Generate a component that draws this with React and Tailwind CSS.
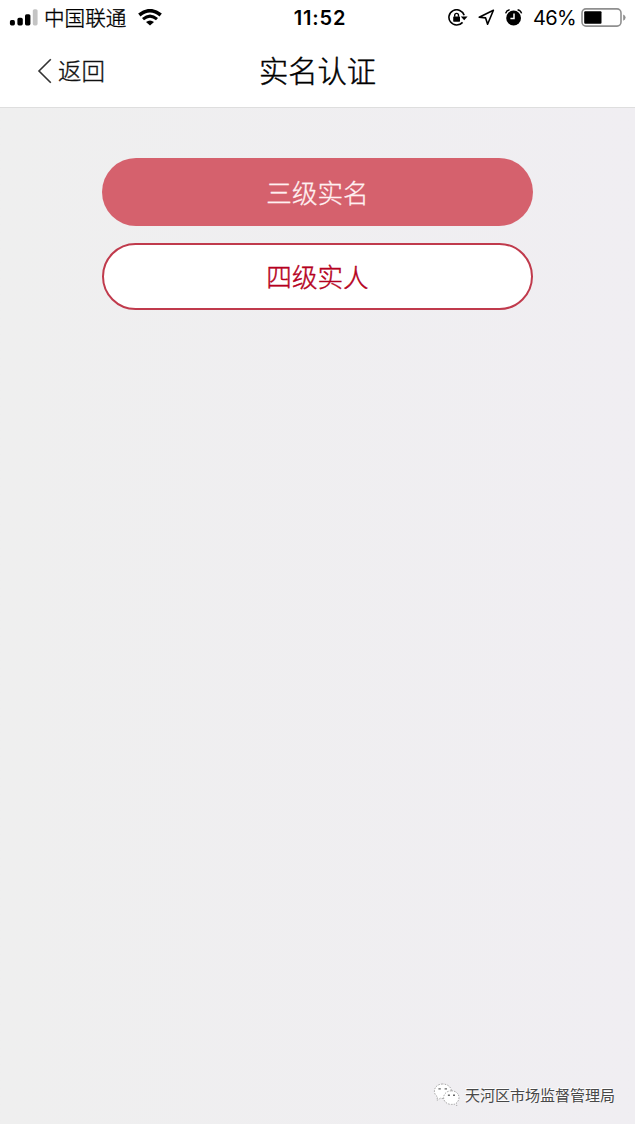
const cjk = "font-['Noto_Sans_CJK_SC',sans-serif]";

function SignalIcon() {
  return (
    <svg className="block h-[18px] w-[29px] shrink-0" viewBox="0 0 29 18">
      <rect x="0.9" y="11.1" width="5" height="5.3" rx="1.6" fill="#000" />
      <rect x="8.4" y="8.8" width="5.4" height="7.6" rx="1.6" fill="#000" />
      <rect x="16" y="5.2" width="5.4" height="11.2" rx="1.6" fill="#000" />
      <rect x="23.8" y="0.2" width="4.8" height="16.2" rx="1.6" fill="#c4c4c4" />
    </svg>
  );
}

function WifiIcon() {
  return (
    <svg className="block h-[18px] w-[24px] shrink-0" viewBox="0 0 24 18" fill="none" stroke="#000">
      <path d="M1.3 6Q12-2.6 22.7 6" strokeWidth="3.6" />
      <path d="M5 10.2Q12 4 19 10.2" strokeWidth="3" />
      <path d="M8 13Q12 9.8 16 13L12 16.6Z" fill="#000" stroke="none" />
    </svg>
  );
}

function RotationLockIcon() {
  return (
    <svg className="block h-[18px] w-[20px] shrink-0" viewBox="0 0 20 18" fill="none" stroke="#000">
      <path d="M16.2 6.2A7.8 7.6 0 1 0 14.6 13.4" strokeWidth="1.6" />
      <path d="M12.8 7.4H19.6L16.2 11.2Z" fill="#000" stroke="none" />
      <rect x="5.2" y="7.4" width="6.8" height="5.3" rx="0.6" fill="#000" stroke="none" />
      <path d="M6.7 7.8V6.3a1.9 1.9 0 0 1 3.8 0V7.8" strokeWidth="1.4" />
    </svg>
  );
}

function LocationIcon() {
  return (
    <svg className="block h-[17px] w-[17px] shrink-0" viewBox="0 0 17 17" fill="none" stroke="#000" strokeWidth="1.6" strokeLinejoin="round">
      <path d="M15.4 1.2L1.2 8.2L7.6 8.9L9.6 15.2Z" />
    </svg>
  );
}

function AlarmIcon() {
  return (
    <svg className="block h-[18px] w-[18px] shrink-0" viewBox="0 0 18 18" fill="none">
      <circle cx="8.6" cy="9" r="7.4" fill="#000" />
      <path d="M9 4.6V9.4H5.4" stroke="#fff" strokeWidth="1.5" />
      <path d="M0.6 4.4Q1.4 1.4 4.6 0.7M16.6 4.4Q15.8 1.4 12.6 0.7" stroke="#000" strokeWidth="1.4" />
    </svg>
  );
}

function BatteryIcon() {
  return (
    <svg className="block h-[20px] w-[45px] shrink-0" viewBox="0 0 45 20">
      <rect x="1" y="0.9" width="39" height="17.2" rx="4" fill="#fff" stroke="#8f8f8f" strokeWidth="1.6" />
      <rect x="3.2" y="3.3" width="17.3" height="12.4" rx="1" fill="#000" />
      <path d="M42.2 6.4Q44.6 7.3 44.6 9.6T42.2 12.8Z" fill="#8f8f8f" />
    </svg>
  );
}

function ChatIcon() {
  return (
    <svg className="block h-[24px] w-[27px] shrink-0" viewBox="0 0 27 24" fill="#fff" stroke="#888" strokeWidth="0.7" strokeDasharray="1.6 1.2">
      <path d="M9.6 1C4.8 1 1.4 4.2 1.4 8.2c0 2.4 1.2 4.4 3.2 5.7L3.9 17.4l3.5-2.2c3 .8 11-.0 11-7C18.4 4.2 14.6 1 9.6 1Z" />
      <path d="M18.4 7.8c-4.4 0-7.8 3-7.8 6.8s3.4 6.8 7.8 6.8c1 0 1.9-.1 2.7-.4l2.8 1.6-.7-2.6c1.7-1.2 2.8-3.2 2.8-5.4 0-3.8-3.2-6.8-7.6-6.8Z" />
      <g fill="#666" stroke="none">
        <path d="M5.4 5.2h2.4v1.4H5.4zM11.6 5.2H14v1.4h-2.4zM14.9 11.6h2v1.3h-2zM20 11.6h2v1.3h-2z" />
      </g>
    </svg>
  );
}

function StatusBar() {
  return (
    <div className="grid h-[35px] grid-cols-[293px_54px_1fr] items-center text-black">
      <div className="flex items-center pl-[9px]">
        <SignalIcon />
        <span className={`ml-[6px] w-[84px] whitespace-nowrap pb-[1px] text-[20.6px] font-light leading-none [-webkit-text-stroke:0.35px] ${cjk}`}>中国联通</span>
        <span className="ml-[10px]"><WifiIcon /></span>
      </div>
      <div className="whitespace-nowrap text-center font-[Inter,sans-serif] text-[20px] font-semibold leading-none tracking-[0.8px]">11:52</div>
      <div className="flex items-center justify-end pr-[9px]">
        <RotationLockIcon />
        <span className="ml-[10px]"><LocationIcon /></span>
        <span className="ml-[10px]"><AlarmIcon /></span>
        <span className="ml-[10px] w-[43px] whitespace-nowrap font-[Inter,sans-serif] text-[20px] leading-none tracking-[-0.7px]">46%</span>
        <span className="ml-[5px]"><BatteryIcon /></span>
      </div>
    </div>
  );
}

export default function App() {
  return (
    <div className={`flex h-[1124px] w-[635px] flex-col overflow-hidden bg-linear-to-r from-[#efefef] to-[#f0eef2] ${cjk}`}>
      <header className="h-[108px] border-b border-[#dedede] bg-white">
        <StatusBar />
        <nav className="grid h-[72px] grid-cols-[217px_1fr_217px] items-center">
          <button className="flex items-center pl-[37px] text-[#111]">
            <svg className="block h-[26px] w-[15px]" viewBox="0 0 15 26" fill="none" stroke="#333" strokeWidth="1.6">
              <path d="M13.8 1.2L2 13L13.8 24.8" />
            </svg>
            <span className="ml-[6px] text-[23.5px] font-light leading-none [-webkit-text-stroke:0.35px]">返回</span>
          </button>
          <h1 className="whitespace-nowrap pb-[2px] text-center text-[29.3px] font-light leading-none text-black [-webkit-text-stroke:0.45px]">实名认证</h1>
        </nav>
      </header>
      <main className="flex flex-1 flex-col gap-[17px] pl-[102px] pr-[102px] pt-[50px]">
        <button className="flex h-[68px] items-center justify-center rounded-full bg-[#d5616d] pb-[1px] text-[25.6px] font-light leading-none text-[#fff1f2] [-webkit-text-stroke:0.3px]">三级实名</button>
        <button className="flex h-[67px] items-center justify-center rounded-full border-2 border-[#c03a4c] bg-white pb-[1px] text-[25.6px] font-light leading-none text-[#b50020] [-webkit-text-stroke:0.4px]">四级实人</button>
      </main>
      <footer className="flex items-center justify-end pb-[17px] pr-[20px]">
        <ChatIcon />
        <span className="ml-[5px] whitespace-nowrap pb-[1px] text-[15px] leading-none text-[#484848] [text-shadow:-1px_-1px_0_#fff]">天河区市场监督管理局</span>
      </footer>
    </div>
  );
}
